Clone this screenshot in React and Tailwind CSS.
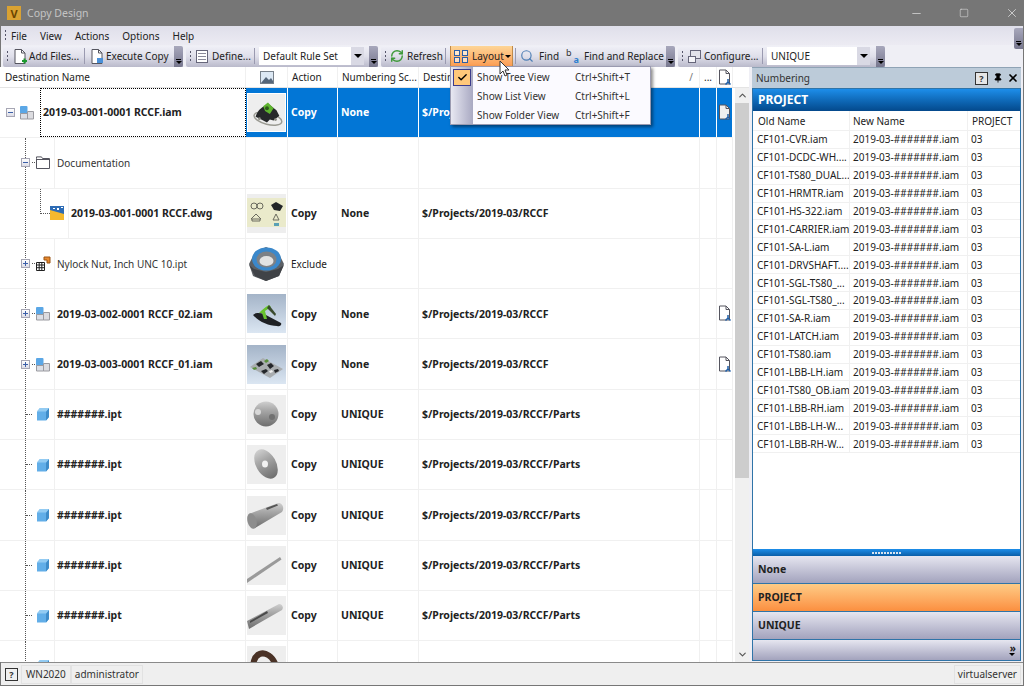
import React from "react";
import { Check, ChevronUp, ChevronDown, Pin, X, Minus, Square, Search, RefreshCw } from "lucide-react";

const FONT = "font-['Noto_Sans','Liberation_Sans',sans-serif]";
const BOLD = "font-bold text-[10.5px]";

function Grip() {
  return <div className="w-[3px] h-[13px] mx-[3px] shrink-0 bg-[radial-gradient(circle,#55556a_1px,transparent_1px)] bg-[length:3px_4px]" />;
}

function Sep() {
  return <div className="w-px h-[16px] mx-[4px] shrink-0 bg-[#9a9ab0]" />;
}

function Overflow() {
  return (
    <div className="ml-auto w-[9px] h-full shrink-0 rounded-r-[2px] bg-gradient-to-b from-[#a8a8bc] to-[#77778e] flex flex-col items-center justify-end pb-[3px]">
      <div className="w-[5px] h-px bg-black mb-px" />
      <div className="w-0 h-0 border-x-[3px] border-x-transparent border-t-[3px] border-t-black" />
    </div>
  );
}

function Strip({ className, children }) {
  return (
    <div className={"h-[21px] flex items-center rounded-l-[2px] bg-gradient-to-b from-[#f0f0f7] via-[#dfdfea] to-[#babacb] " + className}>
      {children}
    </div>
  );
}

function Combo({ label, className }) {
  return (
    <div className={"h-[18px] bg-white flex items-center shrink-0 " + className}>
      <span className="pl-[4px] flex-1">{label}</span>
      <div className="w-[13px] h-full bg-[#d9d9e4] flex items-center justify-center">
        <div className="w-0 h-0 border-x-[4px] border-x-transparent border-t-[4px] border-t-black" />
      </div>
    </div>
  );
}

function FileIcon({ plus, small }) {
  return (
    <svg width="16" height="17" viewBox="0 0 16 17" className="shrink-0">
      <path d="M3 1.500h6.500l3.500 3.500v10.500h-10z" fill="#fff" stroke="#55555f" />
      <path d="M9.500 1.500v3.500h3.500" fill="none" stroke="#55555f" />
      {plus && <path d="M10 13h5M12.500 10.500v5" stroke="#1c9a2e" strokeWidth="2" />}
      {small && <rect x="8" y="10" width="6" height="5" fill="#4a90d8" />}
    </svg>
  );
}

function LayoutIcon() {
  return (
    <svg width="16" height="15" viewBox="0 0 16 15" className="shrink-0">
      <g fill="#ffffff99" stroke="#2c5fa8">
        <rect x="1.500" y="1.500" width="5" height="5" />
        <rect x="9.500" y="1.500" width="5" height="5" />
        <rect x="1.500" y="8.500" width="5" height="5" />
        <rect x="9.500" y="8.500" width="5" height="5" />
      </g>
    </svg>
  );
}

function AssemblyIcon() {
  return (
    <svg width="14" height="15" viewBox="0 0 14 15" className="shrink-0">
      <rect x="0" y="1" width="7.500" height="8" rx="1" fill="#5ba7e6" />
      <path d="M7.500 6.500H13.500V14H7.500z" fill="#dcdce0" stroke="#9a9aa0" />
      <path d="M.5 8.500H7.500V14H.5z" fill="#dcdfe6" stroke="#9a9aa0" />
    </svg>
  );
}

function PartIcon() {
  return (
    <svg width="14" height="14" viewBox="0 0 14 14" className="shrink-0">
      <path d="M1 4.500 4 1h9v9l-3 3.500H1z" fill="#62aee8" />
      <path d="M10 4.500 13 1v9l-3 3.500z" fill="#3f8cc9" />
      <path d="M1 4.500 4 1h9l-3 3.500z" fill="#93cbf2" />
    </svg>
  );
}

function FolderIcon() {
  return (
    <svg width="14" height="13" viewBox="0 0 14 13" className="shrink-0">
      <path d="M.5 2.500V.9h5l1 1.600h7v10h-13z" fill="#fff" stroke="#55555f" />
      <path d="M.5 3.500h13" stroke="#55555f" />
    </svg>
  );
}

function DwgIcon() {
  return (
    <svg width="14" height="14" viewBox="0 0 14 14" className="shrink-0">
      <rect width="14" height="14" fill="#f4b92e" />
      <path d="M0 0h14v8L0 4z" fill="#2d6cb5" />
      <path d="M3 2h2v1H3zM7 2h2v2H7zM11 1h2v1h-2z" fill="#fff" />
    </svg>
  );
}

function NutIcon() {
  return (
    <svg width="15" height="15" viewBox="0 0 15 15" className="shrink-0">
      <path d="M.5 6.500h8v8h-8zM.5 9h8M.5 11.700h8M3.200 6.500v8M5.800 6.500v8" fill="#fff" stroke="#222" />
      <path d="M8 1h6v6h-3V4H8z" fill="#e8892e" stroke="#9a5414" />
    </svg>
  );
}

function Toggle({ open }) {
  return (
    <div className="relative w-[9px] h-[9px] shrink-0 border border-[#a6a6b4] bg-gradient-to-b from-white to-[#dcdce6] flex items-center justify-center">
      <div className="w-[5px] h-px bg-[#3b5fa8]" />
      {!open && <div className="absolute w-px h-[5px] bg-[#3b5fa8]" />}
    </div>
  );
}

function Thumb({ kind, size = 39 }) {
  const sky = kind === "assyB" || kind === "assyC";
  const bg = kind === "nut" ? "#ffffff" : "#eeeeee";
  return (
    <svg width={size} height={size} viewBox="0 0 39 39" className="shrink-0">
      <defs>
        <linearGradient id={"sky" + kind} x1="0" y1="0" x2="0" y2="1">
          <stop offset="0" stopColor="#a4b4c8" />
          <stop offset="1" stopColor="#dbe6f2" />
        </linearGradient>
        <linearGradient id={"steel" + kind} x1="0" y1="0" x2="0" y2="1">
          <stop offset="0" stopColor="#cfcfcf" />
          <stop offset=".35" stopColor="#a8a8a8" />
          <stop offset="1" stopColor="#6e6e6e" />
        </linearGradient>
      </defs>
      <rect width="39" height="39" fill={sky ? `url(#sky${kind})` : bg} />
      {kind === "assyA" && (
        <g>
          <ellipse cx="21" cy="26" rx="15" ry="6" transform="rotate(14 21 26)" fill="none" stroke="#9a9a92" strokeWidth="1.500" />
          <path d="M8 24c2-6 5-9 9-11l4-3 9 7 3 6-6 5-4-1-3 3-6-3z" fill="#26282a" />
          <path d="M16 13l5-4 6 6-4 6-5-3z" fill="#5fb52f" />
          <circle cx="20" cy="15" r="2" fill="#2f5a1c" />
          <circle cx="12" cy="26" r="1.500" fill="#8e8e86" />
          <circle cx="29" cy="27" r="1.500" fill="#8e8e86" />
        </g>
      )}
      {kind === "drawing" && (
        <g>
          <rect x="0" y="4" width="39" height="29" fill="#eaeacb" />
          <g fill="none" stroke="#6a6a5e">
            <circle cx="7" cy="12" r="3" />
            <circle cx="13" cy="12" r="3" />
            <path d="M4 25l5-5 5 5zM5 25v2h8v-2M26 26l3-6 3 6z" />
          </g>
          <path d="M24 11l5-3 7 4-3 5-6-1z" fill="#222528" />
          <rect x="27" y="29" width="5" height="3" fill="#5aa0b5" />
        </g>
      )}
      {kind === "nut" && (
        <g>
          <path d="M2 20 8 8l11-5 12 5 6 12-5 12-13 5-13-5z" fill="#5c6065" />
          <path d="M2 21l6 11 11 5 13-5 5-11-6 4-12 3-12-3z" fill="#404347" />
          <ellipse cx="19.500" cy="15" rx="14.500" ry="11.500" fill="#3b88cb" />
          <ellipse cx="19.500" cy="15.500" rx="10" ry="8" fill="#7d8186" />
          <ellipse cx="19.500" cy="17" rx="7" ry="5" fill="#e3e3e3" />
        </g>
      )}
      {kind === "assyB" && (
        <g>
          <path d="M6 21c3-3 7-2 11-1l17 9c1 2-1 4-4 3-8 0-18-4-24-11z" fill="#1f2124" />
          <path d="M12 19c3-3 6-6 10-8l2 2-6 4 2 8-3 0-2-6z" fill="#68c22e" />
          <path d="M22 11l7 9-1 2-8-8z" fill="#3a4a2e" />
        </g>
      )}
      {kind === "assyC" && (
        <g>
          <path d="M3 22 16 13l20 11-13 9z" fill="#a9adb0" />
          <path d="M9 19l5-3 3 3-5 3zM20 20l4-2 3 3-4 3zM14 26l5-2 2 2-4 3zM27 25l4-1 1 2-4 2z" fill="#24262a" />
          <path d="M17 16l3-2 2 2-3 2zM5 23l4-1 1 2-3 1z" fill="#5a8f3c" />
          <path d="M22 26l3-1 1 2-3 1z" fill="#f0f0f0" />
        </g>
      )}
      {kind === "ball" && (
        <g>
          <circle cx="19" cy="19" r="12.500" fill={`url(#steel${kind})`} />
          <circle cx="11" cy="17" r="3" fill="#d8d8d8" />
          <circle cx="25" cy="22" r="3" fill="#707070" />
        </g>
      )}
      {kind === "washer" && (
        <g>
          <ellipse cx="19" cy="19" rx="10" ry="16" transform="rotate(-30 19 19)" fill={`url(#steel${kind})`} />
          <ellipse cx="18" cy="19" rx="3" ry="3.500" fill="#f2f2f2" />
        </g>
      )}
      {kind === "cylinder" && (
        <g>
          <path d="M2 18 31 7c4-1 7 5 4 9L8 32z" fill={`url(#steel${kind})`} />
          <ellipse cx="5" cy="25" rx="4.500" ry="8" transform="rotate(-15 5 25)" fill="#8d8d8d" />
          <path d="M19 12l11-4 1 1.500-11 4.500z" fill="#555" />
        </g>
      )}
      {kind === "rod" && <path d="M0 33 33 11l1.500 2.500L0 37z" fill="#9a9a9a" />}
      {kind === "shaft" && (
        <g>
          <path d="M0 25 32 8c3 0 5 3 3 6L2 33z" fill={`url(#steel${kind})`} />
          <path d="M3 25l17-10 1 2-18 10z" fill="#4a4a4a" />
        </g>
      )}
      {kind === "ring" && <ellipse cx="18" cy="22" rx="11" ry="15" transform="rotate(-20 18 22)" fill="none" stroke="#4a3226" strokeWidth="6" />}
    </svg>
  );
}

function Cell({ width, children, className = "" }) {
  return (
    <div className={"h-full shrink-0 flex items-center border-r border-[#f0f0f0] whitespace-nowrap " + width + " " + className}>
      {children}
    </div>
  );
}

function DocLinkIcon({ light }) {
  return (
    <svg width="14" height="17" viewBox="0 0 14 17" className="shrink-0">
      <path d="M1.500 1h6.500l3.500 3.500V15h-10z" fill={light ? "#f0f0f0" : "#fff"} stroke="#55555f" />
      <path d="M8 1v3.500h3.500" fill="none" stroke="#55555f" />
      <path d="M10 10v3M7.500 15.500l2.500-2.500 2.500 2.500" fill="none" stroke="#1f5fa8" strokeWidth="1.500" />
    </svg>
  );
}

function Row({ row }) {
  const sel = row.selected;
  const cells = sel ? "bg-[#0276d6] text-white border-[#ffffff]" : "text-[#222]";
  return (
    <div className="h-[50.3px] shrink-0 flex border-b border-[#f0f0f0] box-border">
      {row.kind === "root" && (
        <div className="w-[246px] h-full shrink-0 flex items-center pl-[6px]">
          <Toggle open />
          <div className="w-[5px] shrink-0" />
          <AssemblyIcon />
          <div className={"flex-1 h-full ml-[6px] flex items-center pl-[2px] border border-dotted border-black whitespace-nowrap " + BOLD}>
            {row.name}
          </div>
        </div>
      )}
      {row.kind === "child" && (
        <div className="w-[246px] h-full shrink-0 flex border-r border-[#f0f0f0] -mb-px">
          <div className="h-full w-[25px] shrink-0" />
          <div className="h-full w-0 border-l border-dotted border-[#555] shrink-0" />
          <div className="w-[28px] h-full shrink-0 flex items-center">
            {row.toggle ? (
              <div className="-ml-[5px] mr-[2px]"><Toggle open={row.open} /></div>
            ) : (
              <div className="w-[6px] mr-[4px] border-t border-dotted border-[#555]" />
            )}
            {row.toggle && <div className="w-[3px] mr-[1px] border-t border-dotted border-[#555]" />}
            {row.icon}
          </div>
          <div className="flex-1 h-full flex items-center pl-[2px] border-l border-[#f0f0f0] whitespace-nowrap">
            <span className={row.plain ? "text-[#333]" : BOLD}>{row.name}</span>
          </div>
        </div>
      )}
      {row.kind === "drawing" && (
        <div className="w-[246px] h-full shrink-0 flex border-r border-[#f0f0f0]">
          <div className="h-full w-[25px] shrink-0" />
          <div className="h-full w-0 border-l border-dotted border-[#555] shrink-0" />
          <div className="w-[14px] shrink-0" />
          <div className="h-[25px] w-[10px] shrink-0 border-l border-b border-dotted border-[#555]" />
          <div className="w-[18px] h-full shrink-0 flex items-center"><DwgIcon /></div>
          <div className={"flex-1 h-full flex items-center pl-[2px] border-l border-[#f0f0f0] whitespace-nowrap " + BOLD}>{row.name}</div>
        </div>
      )}
      <Cell width="w-[42px] justify-center" className={sel ? "bg-[#0276d6] border-white" : ""}>
        {row.thumb && (
          <div className={sel ? "border border-white flex" : "flex"}>
            <Thumb kind={row.thumb} size={sel ? 37 : 39} />
          </div>
        )}
      </Cell>
      <Cell width="w-[50px] pl-[3px]" className={cells + (row.excluded ? "" : " " + BOLD)}>{row.action}</Cell>
      <Cell width="w-[81px] pl-[3px]" className={cells + " " + BOLD}>{row.scheme}</Cell>
      <Cell width="w-[281px] pl-[3px]" className={cells + " " + BOLD}>{row.dest}</Cell>
      <Cell width="w-[17px]" className={cells} />
      <Cell width="w-[16px] justify-center" className={cells}>
        {row.link && <DocLinkIcon light={sel} />}
      </Cell>
    </div>
  );
}

const RCCF = "$/Projects/2019-03/RCCF";
const PARTS = "$/Projects/2019-03/RCCF/Parts";
const partRow = (thumb) => ({ kind: "child", icon: <PartIcon />, name: "#######.ipt", thumb, action: "Copy", scheme: "UNIQUE", dest: PARTS });

const ROWS = [
  { kind: "root", selected: true, name: "2019-03-001-0001 RCCF.iam", thumb: "assyA", action: "Copy", scheme: "None", dest: RCCF, link: true },
  { kind: "child", toggle: true, open: true, plain: true, icon: <FolderIcon />, name: "Documentation" },
  { kind: "drawing", name: "2019-03-001-0001 RCCF.dwg", thumb: "drawing", action: "Copy", scheme: "None", dest: RCCF },
  { kind: "child", toggle: true, plain: true, icon: <NutIcon />, name: "Nylock Nut, Inch UNC 10.ipt", thumb: "nut", action: "Exclude", excluded: true },
  { kind: "child", toggle: true, icon: <AssemblyIcon />, name: "2019-03-002-0001 RCCF_02.iam", thumb: "assyB", action: "Copy", scheme: "None", dest: RCCF, link: true },
  { kind: "child", toggle: true, icon: <AssemblyIcon />, name: "2019-03-003-0001 RCCF_01.iam", thumb: "assyC", action: "Copy", scheme: "None", dest: RCCF, link: true },
  partRow("ball"),
  partRow("washer"),
  partRow("cylinder"),
  partRow("rod"),
  partRow("shaft"),
  partRow("ring"),
];

const OLD_NAMES = [
  "CF101-CVR.iam", "CF101-DCDC-WH....", "CF101-TS80_DUAL...", "CF101-HRMTR.iam", "CF101-HS-322.iam",
  "CF101-CARRIER.iam", "CF101-SA-L.iam", "CF101-DRVSHAFT....", "CF101-SGL-TS80_...", "CF101-SGL-TS80_...",
  "CF101-SA-R.iam", "CF101-LATCH.iam", "CF101-TS80.iam", "CF101-LBB-LH.iam", "CF101-TS80_OB.iam",
  "CF101-LBB-RH.iam", "CF101-LBB-LH-W...", "CF101-LBB-RH-W...",
];

const MENU = [
  { label: "Show Tree View", keys: "Ctrl+Shift+T", checked: true },
  { label: "Show List View", keys: "Ctrl+Shift+L" },
  { label: "Show Folder View", keys: "Ctrl+Shift+F" },
];

function SchemeBar({ label, active }) {
  return (
    <div className={"h-[28px] shrink-0 flex items-center pl-[5px] text-[#222] border-b border-[#2f74a8] " + BOLD + " " + (active ? "bg-gradient-to-b from-[#fdcb85] to-[#fb8f3f]" : "bg-gradient-to-b from-[#e6e6f0] to-[#a3a3bd]")}>
      {label}
    </div>
  );
}

export default function App() {
  return (
    <div className={"relative w-[1024px] h-[686px] flex flex-col bg-[#767676] text-[10px] leading-none overflow-hidden " + FONT}>
      {/* Title bar */}
      <div className="h-[26px] shrink-0 flex items-center pl-[7px] text-[#c4c4c4] text-[10.5px]">
        <div className="w-[14px] h-[14px] bg-[#d9a233] flex items-center justify-center text-[#6a4400] font-bold text-[11px] mr-[6px]">V</div>
        <span>Copy Design</span>
        <div className="ml-auto flex items-center gap-[34px] pr-[5px] text-[#e8e8e8]">
          <div className="w-[14px] flex justify-center"><Minus size={13} strokeWidth={1.25} /></div>
          <div className="w-[14px] flex justify-center"><Square size={10} strokeWidth={1.25} /></div>
          <div className="w-[14px] flex justify-center"><X size={14} strokeWidth={1.25} /></div>
        </div>
      </div>

      <div className="flex-1 min-h-0 flex flex-col mx-px mb-px bg-[#efeff5]">
        {/* Menu bar */}
        <div className="h-[19px] shrink-0 flex items-center bg-gradient-to-b from-[#dfdfea] to-[#ecebf3] text-[#222]">
          <Grip />
          <div className="flex gap-[13px] pl-[1px]">
            {["File", "View", "Actions", "Options", "Help"].map((m) => <span key={m}>{m}</span>)}
          </div>
          <div className="ml-auto w-[9px] h-[21px] mt-[6px] bg-gradient-to-b from-[#a8a8bc] to-[#77778e] flex flex-col items-center justify-end pb-[3px] rounded-l-[2px]">
            <div className="w-[5px] h-px bg-black mb-px" />
            <div className="w-0 h-0 border-x-[3px] border-x-transparent border-t-[3px] border-t-black" />
          </div>
        </div>

        {/* Toolbars */}
        <div className="h-[22px] shrink-0 flex items-center pl-[2px] gap-[3px] text-[#222] whitespace-nowrap">
          <Strip className="w-[180px]">
            <Grip />
            <FileIcon plus />
            <span className="ml-[1px] w-[51px]">Add Files...</span>
            <Sep />
            <FileIcon small />
            <span className="ml-[1px]">Execute Copy</span>
            <Overflow />
          </Strip>
          <Strip className="w-[192px]">
            <Grip />
            <svg width="14" height="15" viewBox="0 0 14 15" className="shrink-0">
              <rect x="1.500" y="1.500" width="11" height="12" fill="#fff" stroke="#66667a" />
              <path d="M3 4.500h8M3 7.500h8M3 10.500h8" stroke="#8a8a9a" />
            </svg>
            <span className="ml-[3px] w-[38px]">Define...</span>
            <Sep />
            <Combo label="Default Rule Set" className="w-[105px]" />
            <Overflow />
          </Strip>
          <Strip className="w-[294px]">
            <Grip />
            <RefreshCw size={14} strokeWidth={2.5} className="text-[#3f9a3a] shrink-0" />
            <span className="ml-[3px] w-[35px]">Refresh</span>
            <div className="w-px h-[16px] ml-[3px] mr-[4px] shrink-0 bg-[#9a9ab0]" />
            <div className="h-[21px] w-[63px] shrink-0 flex items-center bg-gradient-to-b from-[#fdd596] to-[#fb9a50] border-x border-[#c08a4a] pl-[2px]">
              <LayoutIcon />
              <span className="ml-[3px] mr-[2px] w-[31px]">Layout</span>
              <div className="w-0 h-0 border-x-[3px] border-x-transparent border-t-[3px] border-t-black" />
            </div>
            <div className="w-px h-[16px] ml-[2px] mr-[4px] shrink-0 bg-[#9a9ab0]" />
            <Search size={14} className="text-[#4f7fb5] shrink-0" />
            <span className="ml-[5px] w-[21px]">Find</span>
            <span className="ml-[6px] w-[13px] text-[#333] text-[9px] leading-[7px] flex flex-col shrink-0">
              <span>b</span>
              <span className="self-end text-[#2d7fd0] font-bold">a</span>
            </span>
            <span className="ml-[5px]">Find and Replace</span>
            <Overflow />
          </Strip>
          <Strip className="w-[207px]">
            <Grip />
            <svg width="15" height="15" viewBox="0 0 15 15" className="shrink-0">
              <rect x="3.500" y="1.500" width="10" height="8" fill="#e2e2ea" stroke="#66667a" />
              <rect x="1.500" y="7.500" width="7" height="6" fill="#f4f4f8" stroke="#66667a" />
            </svg>
            <span className="ml-[2px] w-[54px]">Configure...</span>
            <Sep />
            <Combo label="UNIQUE" className="w-[103px]" />
            <Overflow />
          </Strip>
        </div>

        {/* Main area */}
        <div className="flex-1 min-h-0 flex">
          <div className="w-[749px] shrink-0 flex flex-col bg-white text-[#222] -ml-px">
            {/* Grid header */}
            <div className="h-[21px] shrink-0 flex items-center border-b border-[#e4e4e4]">
              <Cell width="w-[246px] pl-[5px]">Destination Name</Cell>
              <Cell width="w-[42px] justify-center">
                <svg width="14" height="13" viewBox="0 0 14 13">
                  <rect x=".5" y=".5" width="13" height="12" fill="#dce8f4" stroke="#77808a" />
                  <path d="M1 12 6 6l3 3 2-2 2 3v2z" fill="#55667a" />
                </svg>
              </Cell>
              <Cell width="w-[50px] pl-[4px]">Action</Cell>
              <Cell width="w-[81px] pl-[4px]">Numbering Sc...</Cell>
              <Cell width="w-[281px] pl-[4px] justify-between pr-[6px]">
                <span>Destination</span>
                <span className="text-[#777]">/</span>
              </Cell>
              <Cell width="w-[17px] justify-center">...</Cell>
              <Cell width="w-[16px] justify-center"><DocLinkIcon /></Cell>
            </div>

            {/* Grid rows and scrollbar */}
            <div className="flex-1 min-h-0 flex">
              <div className="w-[733px] shrink-0 overflow-hidden flex flex-col">
                {ROWS.map((r, i) => <Row key={i} row={r} />)}
              </div>
              <div className="ml-[2px] w-[14px] shrink-0 flex flex-col bg-[#f0f0f0] text-[#555]">
                <div className="h-[15px] flex items-center justify-center"><ChevronUp size={11} strokeWidth={2.5} /></div>
                <div className="h-[375px] bg-[#cdcdcd]" />
                <div className="flex-1" />
                <div className="h-[15px] flex items-center justify-center"><ChevronDown size={11} strokeWidth={2.5} /></div>
              </div>
            </div>
          </div>

          {/* Numbering panel */}
          <div className="w-[269px] ml-[3px] shrink-0 flex flex-col mb-px bg-[#bccbd9] border-t border-[#8fa3b5] text-[#222]">
            <div className="h-[20px] shrink-0 flex items-center pl-[4px] text-[#333]">
              <span>Numbering</span>
              <div className="ml-auto flex items-center gap-[4px] pr-[2px]">
                <div className="w-[13px] h-[13px] border border-[#333] bg-[#e6e6e6] flex items-center justify-center text-[9px] font-bold mr-[1px]">?</div>
                <Pin size={10} className="text-black" fill="#000" />
                <X size={12} strokeWidth={3.5} className="text-black" />
              </div>
            </div>
            <div className="flex-1 min-h-0 flex flex-col border border-[#2f74a8] bg-white">
              <div className="h-[22px] shrink-0 flex items-center pl-[5px] text-white font-bold text-[12px] bg-gradient-to-b from-[#1d8eea] to-[#04498c]">
                PROJECT
              </div>
              <div className="h-[20px] shrink-0 flex items-center border-b border-[#f0f0f0]">
                <div className="w-[97px] h-full flex items-center pl-[5px] border-r border-[#f0f0f0]">Old Name</div>
                <div className="w-[118px] h-full flex items-center pl-[3px] border-r border-[#f0f0f0]">New Name</div>
                <div className="flex-1 h-full flex items-center pl-[4px]">PROJECT</div>
              </div>
              <div className="flex-1 min-h-0 overflow-hidden">
                {OLD_NAMES.map((n, i) => (
                  <div key={i} className="h-[17.9px] flex items-center border-b border-[#f0f0f0]">
                    <div className="w-[97px] h-full flex items-center pl-[4px] border-r border-[#f0f0f0] whitespace-nowrap overflow-hidden">{n}</div>
                    <div className="w-[118px] h-full flex items-center pl-[3px] border-r border-[#f0f0f0] whitespace-nowrap">2019-03-#######.iam</div>
                    <div className="flex-1 h-full flex items-center pl-[3px]">03</div>
                  </div>
                ))}
              </div>
              <div className="h-[7px] shrink-0 flex items-center justify-center bg-gradient-to-b from-[#1d8eea] to-[#0a5ea8]">
                <div className="w-[30px] h-[2px] bg-[repeating-linear-gradient(90deg,#d8e4f0_0_2px,transparent_2px_3px)]" />
              </div>
              <SchemeBar label="None" />
              <SchemeBar label="PROJECT" active />
              <SchemeBar label="UNIQUE" />
              <div className="h-[20px] shrink-0 flex flex-col items-end justify-center pr-[4px] bg-gradient-to-b from-[#e6e6f0] to-[#a3a3bd] text-[10px] font-bold">
                <span className="leading-[8px]">»</span>
                <div className="mr-[1px] mt-px w-0 h-0 border-x-[3px] border-x-transparent border-t-[3px] border-t-black" />
              </div>
            </div>
          </div>
        </div>

        {/* Status bar */}
        <div className="h-[23px] shrink-0 flex items-center bg-[#efefef] text-[#333] border-t border-[#8a8a8a] pl-[4px] pr-[2px]">
          <div className="w-[13px] h-[13px] border border-[#333] flex items-center justify-center text-[9px] font-bold mr-[3px]">?</div>
          <div className="h-[19px] px-[4px] flex items-center border border-[#e2e2e2]">WN2020</div>
          <div className="h-[19px] px-[3px] flex items-center border border-[#e2e2e2]">administrator</div>
          <div className="ml-auto h-[19px] px-[3px] flex items-center border border-[#e2e2e2]">virtualserver</div>
        </div>
      </div>

      {/* Layout dropdown */}
      <div className="absolute left-[450px] top-[66px] w-[201px] h-[59px] flex bg-[#fbfaff] border border-[#9a9ab0] shadow-[2px_2px_3px_rgba(0,0,0,0.45)] text-[#333]">
        <div className="w-[22px] shrink-0 bg-gradient-to-r from-[#e8e8f2] to-[#a9a9c2]" />
        <div className="flex-1 flex flex-col">
          {MENU.map((m) => (
            <div key={m.label} className="h-[19px] flex items-center pl-[4px]">
              <span className="w-[98px]">{m.label}</span>
              <span>{m.keys}</span>
            </div>
          ))}
        </div>
        <div className="absolute left-[2px] top-[2px] w-[18px] h-[17px] bg-[#ffc87a] border border-[#3c3c8c] flex items-center justify-center">
          <Check size={11} strokeWidth={3} className="text-black" />
        </div>
      </div>

      {/* Mouse cursor */}
      <svg width="12" height="18" viewBox="0 0 12 18" className="absolute left-[499px] top-[60px]">
        <path d="M1 1v13l3-3 2 5 2-1-2-5h4z" fill="#fff" stroke="#333" />
      </svg>
    </div>
  );
}
